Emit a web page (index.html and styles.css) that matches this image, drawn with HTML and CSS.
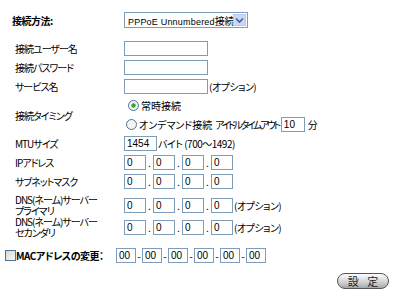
FILE: index.html
```html
<!DOCTYPE html>
<html lang="ja">
  <head>
    <meta charset="UTF-8" />
    <title>WAN設定</title>
    <link rel="stylesheet" href="styles.css">
  </head>
  <body>
    <div class="head">
      <span class="head-label">接続方法:</span>
      <div class="select">
        <span class="select-text">PPPoE Unnumbered<span class="jp">接続</span></span>
        <span class="select-arrow">
          <svg width="9" height="7" viewBox="0 0 9 7"><path d="M1 1.5 L4.5 5 L8 1.5" fill="none" stroke="#4d6185" stroke-width="1.6"/></svg>
        </span>
      </div>
    </div>

    <div class="fields">
      <div class="row">
        <span class="label">接続ユーザー名</span>
        <input class="box w84" type="text" />
      </div>
      <div class="row">
        <span class="label">接続パスワード</span>
        <input class="box w84" type="password" />
      </div>
      <div class="row">
        <span class="label">サービス名</span>
        <input class="box w84" type="text" />
        <span class="note">(オプション)</span>
      </div>
      <div class="row tall">
        <span class="label">接続タイミング</span>
        <div class="choices">
          <div class="choice first">
            <svg class="radio" width="11" height="11" viewBox="0 0 11 11">
              <circle cx="5.5" cy="5.5" r="5" fill="#f4f4f0" stroke="#4f7296"/>
              <circle cx="5.5" cy="5.5" r="2.2" fill="#2fa83a"/>
            </svg>
            <span>常時接続</span>
          </div>
          <div class="choice">
            <svg class="radio" width="11" height="11" viewBox="0 0 11 11">
              <circle cx="5.5" cy="5.5" r="5" fill="#f4f4f0" stroke="#4f7296"/>
            </svg>
            <span>オンデマンド接続</span>
            <span class="idle">アイドルタイムアウト</span>
            <input class="box w24" type="text" value="10" />
            <span class="unit">分</span>
          </div>
        </div>
      </div>
      <div class="row">
        <span class="label">MTUサイズ</span>
        <input class="box w33" type="text" value="1454" />
        <span class="note">バイト (700〜1492)</span>
      </div>
      <div class="row">
        <span class="label">IPアドレス</span>
        <input class="box oct" value="0" /><span class="dot">.</span><input class="box oct" value="0" /><span class="dot">.</span><input class="box oct" value="0" /><span class="dot">.</span><input class="box oct" value="0" />
      </div>
      <div class="row">
        <span class="label">サブネットマスク</span>
        <input class="box oct" value="0" /><span class="dot">.</span><input class="box oct" value="0" /><span class="dot">.</span><input class="box oct" value="0" /><span class="dot">.</span><input class="box oct" value="0" />
      </div>
      <div class="row dns">
        <span class="label">DNS(ネーム)サーバー<br>プライマリ</span>
        <input class="box oct" value="0" /><span class="dot">.</span><input class="box oct" value="0" /><span class="dot">.</span><input class="box oct" value="0" /><span class="dot">.</span><input class="box oct" value="0" />
        <span class="note">(オプション)</span>
      </div>
      <div class="row dns second">
        <span class="label">DNS(ネーム)サーバー<br>セカンダリ</span>
        <input class="box oct" value="0" /><span class="dot">.</span><input class="box oct" value="0" /><span class="dot">.</span><input class="box oct" value="0" /><span class="dot">.</span><input class="box oct" value="0" />
        <span class="note">(オプション)</span>
      </div>
    </div>

    <div class="mac">
      <span class="check"></span>
      <span class="mac-label">MACアドレスの変更：</span>
      <input class="box hex" value="00" /><span class="dash">-</span><input class="box hex" value="00" /><span class="dash">-</span><input class="box hex" value="00" /><span class="dash">-</span><input class="box hex" value="00" /><span class="dash">-</span><input class="box hex" value="00" /><span class="dash">-</span><input class="box hex" value="00" />
    </div>

    <div class="actions">
      <button class="submit" type="button">設 定</button>
    </div>
  </body>
</html>
```

FILE: styles.css
```css
body {
  margin: 0;
  font-family: "Noto Sans CJK JP", sans-serif;
  font-size: 10px;
  font-feature-settings: "palt";
  color: #000;
  background-color: #fff;
}
.head {
  display: flex;
  align-items: center;
  height: 20px;
  margin-top: 10px;
  padding-left: 12px;
}
.head-label {
  width: 112px;
  font-weight: bold;
  letter-spacing: -0.5px;
}
.select {
  display: flex;
  align-items: center;
  width: 124px;
  height: 16px;
  box-sizing: border-box;
  border: 1px solid #7f9db9;
  padding-left: 3px;
  padding-right: 1px;
}
.select-text {
  flex: 1;
  overflow: hidden;
  font-family: "Liberation Sans", sans-serif;
  font-size: 9px;
  letter-spacing: 0.2px;
  white-space: nowrap;
}
.select-text .jp {
  font-family: "Noto Sans CJK JP", sans-serif;
  font-size: 10px;
  letter-spacing: -0.3px;
}
.select-arrow {
  display: flex;
  align-items: center;
  justify-content: center;
  flex: none;
  width: 13px;
  height: 12px;
  box-sizing: border-box;
  background-color: #c8d8fb;
  border: 1px solid #b4c8f4;
}
.fields {
  margin-top: 9px;
  padding-left: 15px;
}
.row {
  display: flex;
  align-items: center;
  height: 19px;
  white-space: nowrap;
}
.row.tall {
  height: 38px;
}
.row.dns {
  height: 24px;
  margin-top: 2px;
}
.row.dns.second {
  height: 20px;
  margin-top: 0;
}
.label {
  flex: none;
  width: 109px;
  line-height: 11px;
  letter-spacing: -1px;
}
.box {
  height: 15px;
  box-sizing: border-box;
  border: 1px solid #7f9db9;
  padding: 0 2px;
  margin: 0;
  font-family: "Liberation Sans", sans-serif;
  font-size: 10px;
  color: #000;
  background-color: #fff;
}
.w84 {
  width: 84px;
}
.w33 {
  width: 33px;
}
.w24 {
  width: 24px;
}
.oct {
  width: 22px;
}
.hex {
  width: 20px;
}
.dot {
  width: 7px;
  text-align: center;
}
.dash {
  width: 6px;
  text-align: center;
}
.note {
  margin-left: 1px;
  letter-spacing: -0.5px;
}
.choices {
  display: flex;
  flex-direction: column;
}
.choice {
  display: flex;
  align-items: center;
  height: 20px;
  gap: 2px;
  padding-left: 2px;
}
.choice.first {
  height: 18px;
  padding-left: 4px;
}
.idle {
  margin-left: 1px;
  letter-spacing: -2.4px;
}
.unit {
  margin-left: 1px;
}
.mac {
  display: flex;
  align-items: center;
  height: 20px;
  margin-top: 8px;
  padding-left: 5px;
  white-space: nowrap;
}
.check {
  width: 11px;
  height: 11px;
  box-sizing: border-box;
  border: 1px solid #4f7296;
  background: linear-gradient(135deg, #d8d8d2, #f8f8f6);
}
.mac-label {
  width: 100px;
  font-weight: bold;
  letter-spacing: -0.5px;
}
.actions {
  display: flex;
  justify-content: flex-end;
  padding-right: 11px;
  margin-top: 8px;
}
.submit {
  width: 52px;
  height: 16px;
  padding: 0;
  border: 1px solid #555;
  border-radius: 8px;
  background: linear-gradient(#fdfdfd, #d0d0d0 60%, #a8a8a8);
  font-family: "Noto Sans CJK JP", sans-serif;
  font-size: 11px;
  line-height: 14px;
  letter-spacing: 3px;
  text-indent: 3px;
  color: #222;
}
```
